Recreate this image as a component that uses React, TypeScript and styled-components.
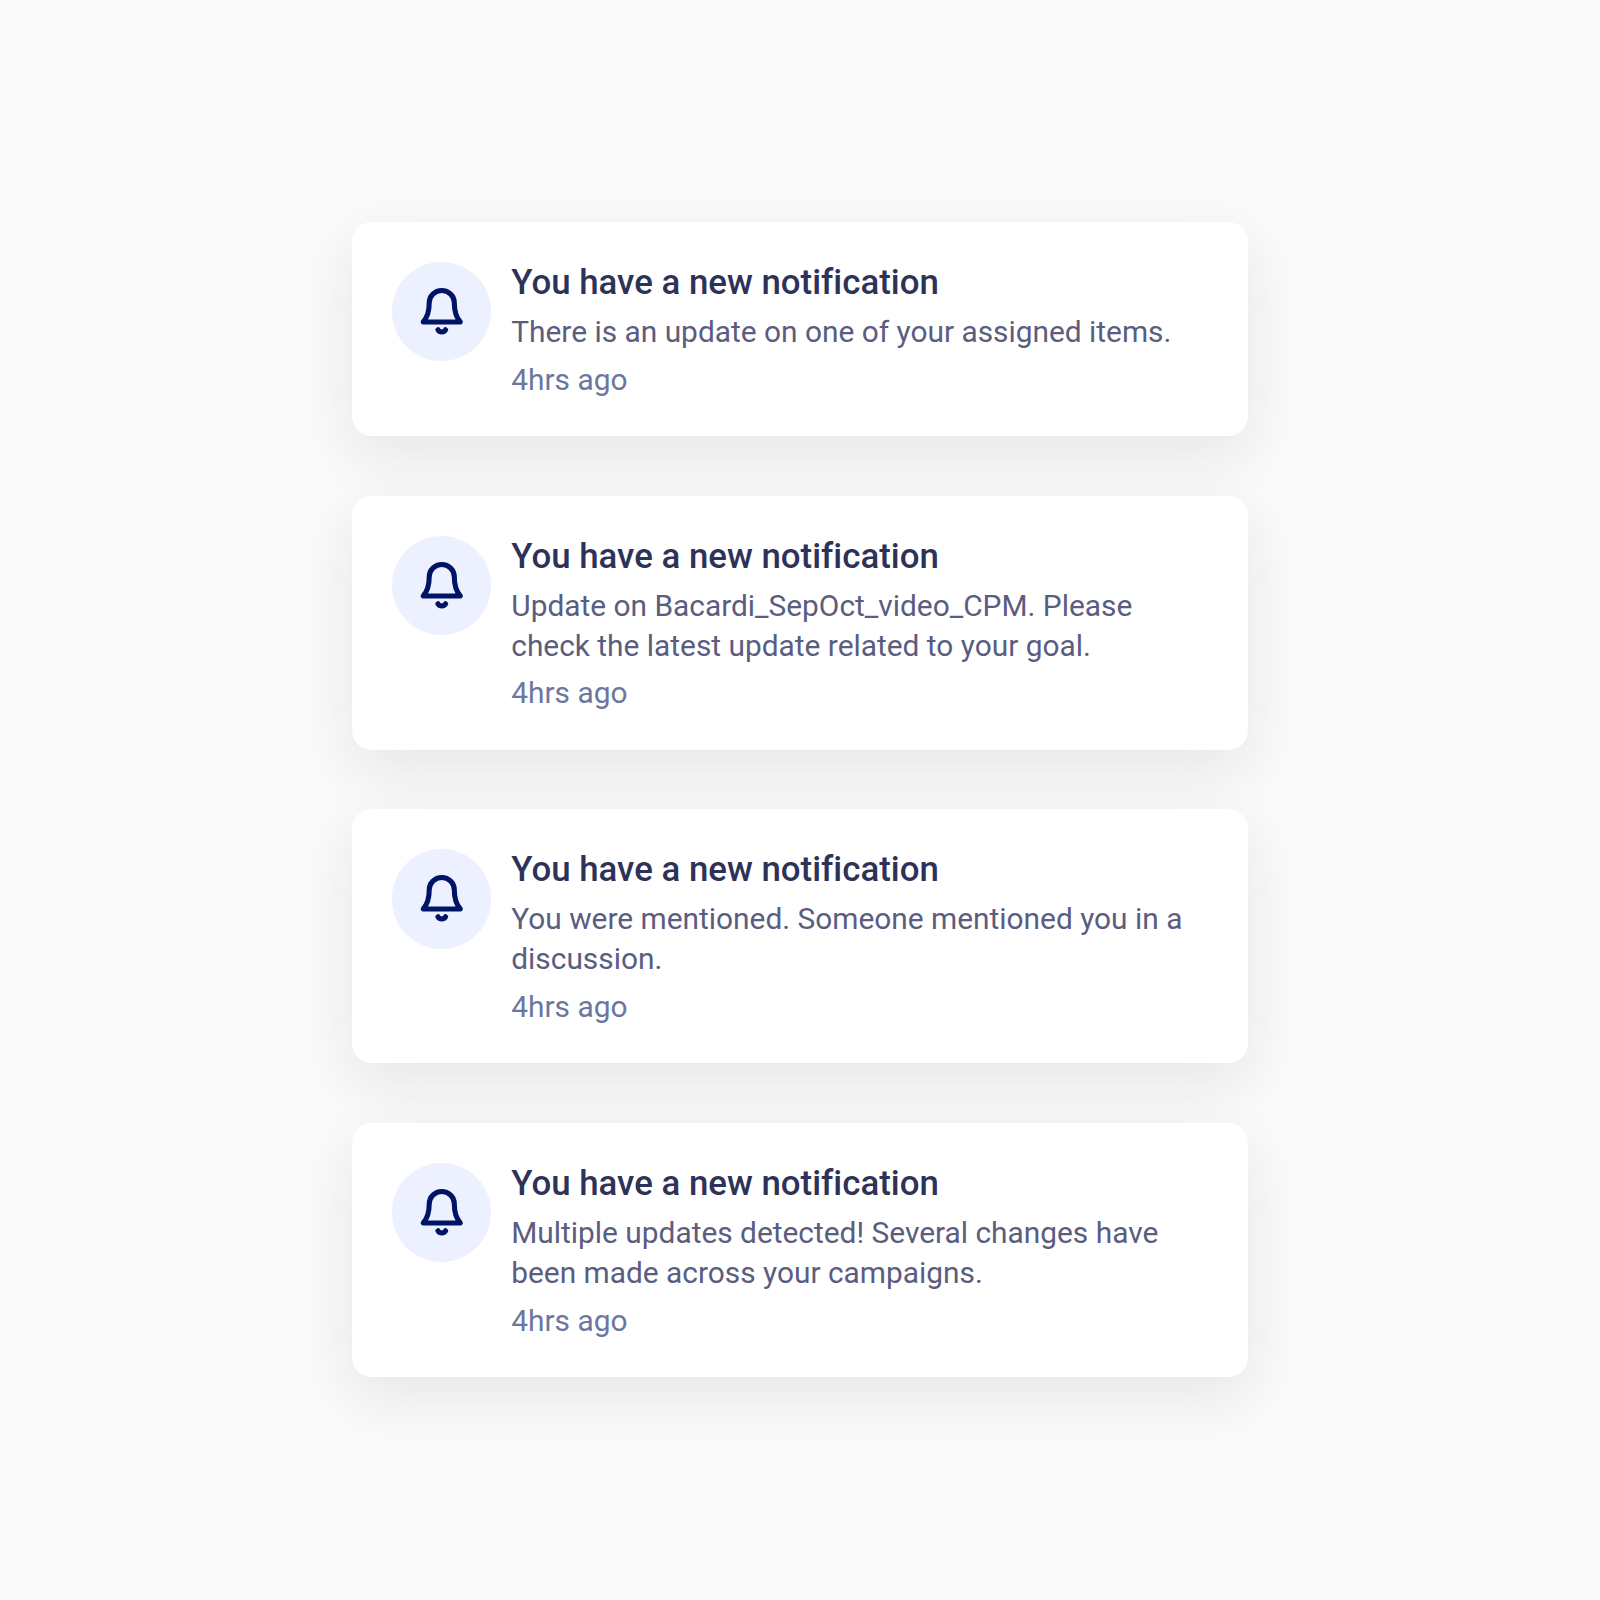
import React from "react";
import styled, { createGlobalStyle } from "styled-components";

const GlobalStyle = createGlobalStyle`
  *, *::before, *::after { box-sizing: border-box; }
  body { margin: 0; background: #fafafa; }
`;

const Page = styled.main`
  min-height: 1600px;
  display: flex;
  flex-direction: column;
  align-items: center;
  gap: 59.73px;
  padding-top: 222.1px;
  background: #fafafa;
  font-family: Roboto, "Liberation Sans", sans-serif;
`;

const Card = styled.article`
  width: 896px;
  display: flex;
  align-items: flex-start;
  gap: 19.91px;
  padding: 39.82px 39.82px 37.9px;
  border-radius: 20px;
  background: #ffffff;
  box-shadow: 0 20px 58px rgba(22, 36, 58, 0.09);
`;

const IconBadge = styled.div`
  flex: none;
  width: 99.55px;
  height: 99.55px;
  border-radius: 50%;
  background: #ecf0ff;
`;

const BellSvg = styled.svg`
  display: block;
  width: 100%;
  height: 100%;
  fill: none;
  stroke: #001466;
  stroke-width: 5.1;
  stroke-linecap: round;
  stroke-linejoin: round;
`;

const Content = styled.div`
  flex: 1;
  min-width: 0;
  display: flex;
  flex-direction: column;
`;

const Title = styled.h2`
  margin: 0 0 8px;
  font-size: 34.84px;
  line-height: 42.2px;
  font-weight: 500;
  font-variant-ligatures: none;
  color: #2e3258;
`;

const Message = styled.p`
  margin: 0 0 10px;
  font-size: 29.87px;
  line-height: 39.82px;
  font-weight: 400;
  color: #5a5d7f;
`;

const Time = styled.time`
  display: block;
  font-size: 29.87px;
  line-height: 36.3px;
  color: #6c76a0;
`;

const BellIcon = () => (
  <BellSvg viewBox="0 0 100 100" aria-hidden="true">
    <path d="M37.4 41C37.4 34.1 43 28.6 50 28.6S62.6 34.1 62.6 41C62.6 49 63.8 54.8 68.4 59.7Q69 60.3 68.2 60.3H31.8Q31 60.3 31.6 59.7C36.2 54.8 37.4 49 37.4 41Z" />
    <path d="M46.2 68.1C48 70.9 52 70.9 53.8 68.1" />
  </BellSvg>
);

const messages = [
  "There is an update on one of your assigned items.",
  "Update on Bacardi_SepOct_video_CPM. Please check the latest update related to your goal.",
  "You were mentioned. Someone mentioned you in a discussion.",
  "Multiple updates detected! Several changes have been made across your campaigns.",
];

export default function App() {
  return (
    <>
      <GlobalStyle />
      <Page>
        {messages.map((message) => (
          <Card key={message}>
            <IconBadge>
              <BellIcon />
            </IconBadge>
            <Content>
              <Title>You have a new notification</Title>
              <Message>{message}</Message>
              <Time>4hrs ago</Time>
            </Content>
          </Card>
        ))}
      </Page>
    </>
  );
}
